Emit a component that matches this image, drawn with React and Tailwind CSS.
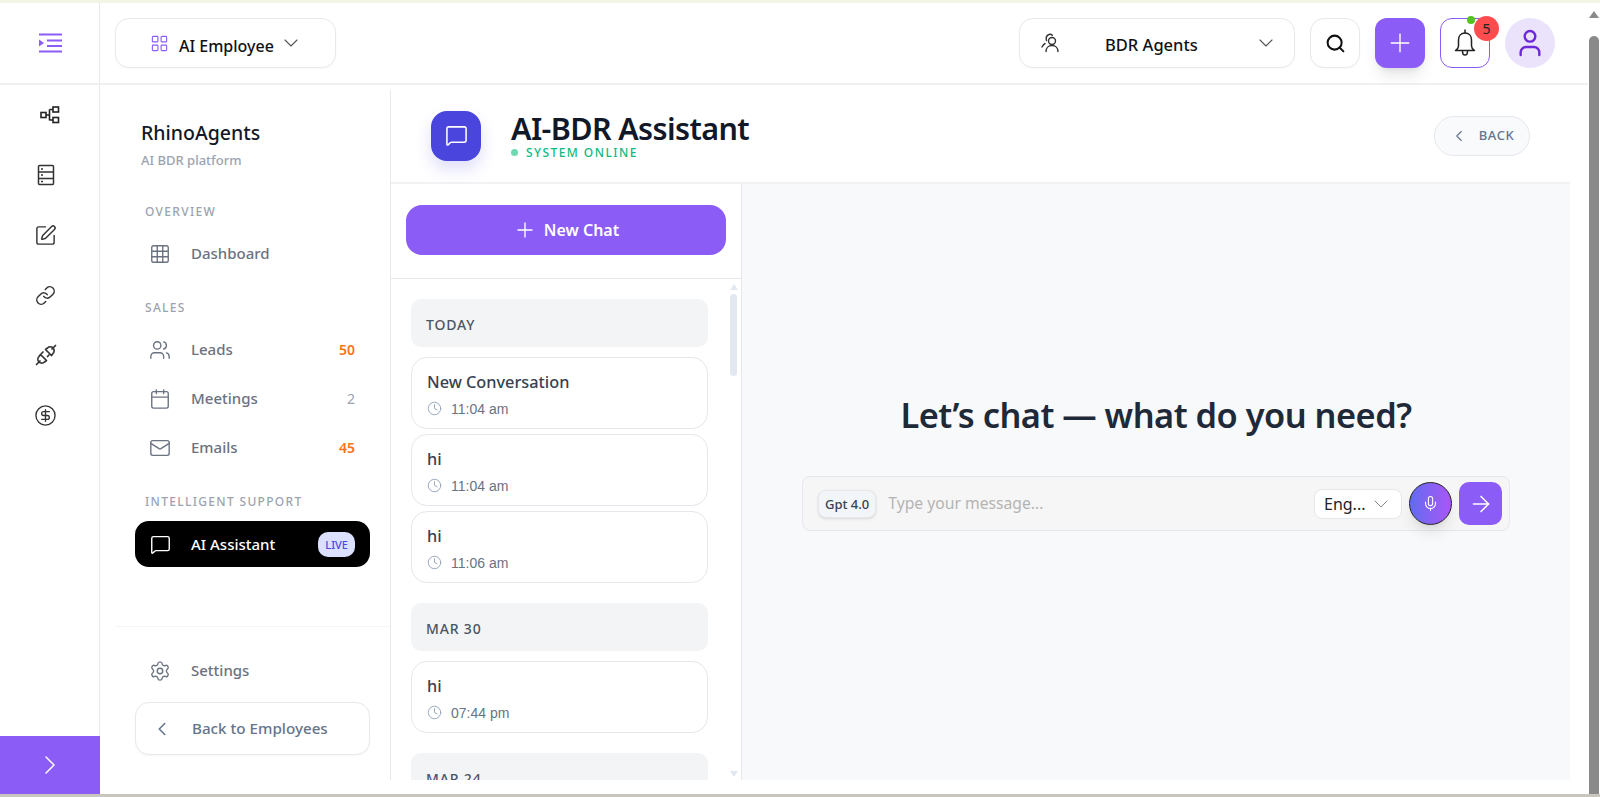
import React from "react";
import {
  ArrowRight,
  Calendar,
  ChevronDown,
  ChevronLeft,
  ChevronRight,
  CircleDollarSign,
  Clock,
  Grid3x3,
  LayoutGrid,
  Link,
  Mail,
  MessageSquare,
  Mic,
  Plus,
  Search,
  Settings,
  SquarePen,
  User,
  Users,
} from "lucide-react";

const font = "font-['Noto_Sans','Open_Sans',sans-serif]";

function MenuIcon() {
  return (
    <svg width="24" height="20" viewBox="0 0 24 20" fill="none" stroke="#8b5cf6" strokeWidth="2">
      <path d="M1 1.500h23M9 7.500h15M9 13h15M1 18.500h23" />
      <path d="M1 6.500l5 3.500-5 3.500z" fill="#8b5cf6" stroke="none" />
    </svg>
  );
}

function FlowIcon() {
  return (
    <svg width="20" height="18" viewBox="0 0 20 18" fill="none" stroke="#222" strokeWidth="1.600">
      <rect x="1" y="6.500" width="5" height="5" />
      <rect x="13" y="1" width="5.500" height="5" />
      <rect x="13" y="11.500" width="5.500" height="5" />
      <path d="M6 9h3.500M9.500 3.500v11M9.500 3.500H13M9.500 14H13" />
    </svg>
  );
}

function ServerIcon() {
  return (
    <svg width="18" height="22" viewBox="0 0 18 22" fill="none" stroke="#333" strokeWidth="1.500">
      <rect x="1.500" y="1.500" width="15" height="19" rx="1" />
      <path d="M1.500 8h15M1.500 14.500h15M4 5h2M4 11h2M4 17.500h2" />
    </svg>
  );
}

function PlugIcon() {
  return (
    <svg width="22" height="22" viewBox="0 0 22 22" fill="none" stroke="#333" strokeWidth="1.700" strokeLinecap="round" strokeLinejoin="round">
      <path d="M1.500 20.500l3.500-3.500M20.500 1.500L17 5" />
      <path d="M5.500 10.500l6 6-2 1.500a3.500 3.500 0 0 1-5.500-5.500z" />
      <path d="M16.500 11.500l-6-6 2-1.500a3.500 3.500 0 0 1 5.500 5.500z" />
      <path d="M8 8l-1.500 1.500M12.500 12.500L14 11" />
    </svg>
  );
}

function AgentsIcon() {
  return (
    <svg width="20" height="20" viewBox="0 0 20 20" fill="none" stroke="#333" strokeWidth="1.400" strokeLinecap="round">
      <circle cx="12" cy="8" r="3.500" />
      <path d="M6 18.500c0-3.500 2.500-6 6-6s6 2.500 6 6" />
      <path d="M5 10.500c-1 .5-2 1.500-3 3.500M6.500 7.500c-.7-2.500 0-5 2.500-6 1.200-.4 2.500 0 3.300.7" />
    </svg>
  );
}

function BellIcon() {
  return (
    <svg width="22" height="28" viewBox="0 0 22 28" fill="none" stroke="#222" strokeWidth="1.500" strokeLinecap="round" strokeLinejoin="round">
      <path d="M11 1v3" />
      <path d="M11 4c-4 0-6.500 3-6.500 7v6c0 1.500-1 3-3 4.500h19c-2-1.500-3-3-3-4.500v-6c0-4-2.500-7-6.500-7z" />
      <path d="M8.500 22.500c0 2 1 3.500 2.500 3.500s2.500-1.500 2.500-3.500" />
    </svg>
  );
}

function RailIcon({ children }) {
  return <div className="flex h-[60px] items-center justify-center pr-[8px]">{children}</div>;
}

function NavItem({ icon: Icon, label, count, hot }) {
  return (
    <div className="flex h-[49px] items-center pl-[14px] pr-[15px]">
      <Icon size={22} strokeWidth={1.500} className="mr-[20px] shrink-0 text-[#6b7280]" />
      <span className="flex-1 text-[15px] font-medium text-[#6b7280]">{label}</span>
      {count && <span className={`text-[14px] ${hot ? "font-semibold text-[#f97316]" : "text-[#9ca3af]"}`}>{count}</span>}
    </div>
  );
}

function SectionLabel({ children, className = "" }) {
  return <div className={`pl-[10px] text-[12px] font-medium leading-[18px] tracking-[0.11em] text-[#9ca3af] ${className}`}>{children}</div>;
}

function DayLabel({ children }) {
  return (
    <div className="flex h-[48px] items-center rounded-[10px] bg-[#f3f4f6] pl-[15px] pt-[2px] text-[14px] font-medium tracking-[0.06em] text-[#4b5563]">
      {children}
    </div>
  );
}

function ChatCard({ title, time }) {
  return (
    <div className="flex h-[72px] flex-col justify-center rounded-[16px] border border-[#e5e7eb] bg-white pl-[15px] pt-[2px]">
      <div className="text-[16.300px] font-medium leading-[24px] text-[#374151]">{title}</div>
      <div className="mt-[5px] flex items-center gap-[9px] font-['Liberation_Sans',sans-serif] text-[14px] leading-[20px] text-[#6b7280]">
        <Clock size={15} strokeWidth={1.500} className="text-[#94a3b8]" />
        {time}
      </div>
    </div>
  );
}

export default function App() {
  return (
    <div className={`flex h-[797px] flex-col overflow-hidden bg-white ${font}`}>
      <div className="h-[3px] shrink-0 bg-[#f4f4e6]" />
      <div className="flex min-h-0 flex-1">
        <div className="flex min-w-0 flex-1 flex-col">
          {/* top bar */}
          <div className="flex h-[82px] shrink-0 items-center border-b-2 border-[#f0f0f0]">
            <div className="flex h-full w-[100px] shrink-0 items-center justify-center border-r border-[#e9e9e9]">
              <MenuIcon />
            </div>
            <button className="ml-[15px] flex h-[50px] w-[221px] items-center rounded-[14px] border border-[#e9e9e9] bg-white pl-[34px] shadow-[0_1px_2px_rgba(0,0,0,0.03)]">
              <LayoutGrid size={19} strokeWidth={1.400} className="text-[#8b5cf6]" />
              <span className="ml-[10px] mt-[5px] text-[16px] font-medium text-[#111]">AI Employee</span>
              <ChevronDown size={24} strokeWidth={1.100} className="ml-[5px] text-[#555]" />
            </button>
            <div className="ml-auto flex items-center pr-[33px]">
              <button className="flex h-[50px] w-[276px] items-center rounded-[14px] border border-[#e9e9e9] bg-white pl-[20px] pr-[16px] shadow-[0_1px_2px_rgba(0,0,0,0.03)]">
                <AgentsIcon />
                <span className="ml-[45px] mt-[4px] flex-1 text-left text-[16.500px] font-medium text-[#111]">BDR Agents</span>
                <ChevronDown size={24} strokeWidth={1.100} className="text-[#555]" />
              </button>
              <button className="ml-[15px] flex h-[50px] w-[50px] items-center justify-center rounded-[14px] border border-[#e9e9e9] bg-white shadow-[0_1px_2px_rgba(0,0,0,0.03)]">
                <Search size={21} strokeWidth={2.300} className="text-[#111]" />
              </button>
              <button className="ml-[15px] flex h-[50px] w-[50px] items-center justify-center rounded-[12px] bg-[#8b5cf6] shadow-lg">
                <Plus size={30} strokeWidth={1.100} className="text-white" />
              </button>
              <button className="relative ml-[15px] flex h-[50px] w-[50px] items-center justify-center rounded-[12px] border border-[#8b5cf6] bg-white">
                <BellIcon />
                <span className="absolute right-[14px] top-[-3px] h-[8px] w-[8px] rounded-full bg-[#52c41a]" />
                <span className="absolute right-[-10px] top-[-3px] flex h-[25px] w-[25px] items-center justify-center rounded-full bg-[#ff4d4f] text-[14px] text-[#222]">5</span>
              </button>
              <div className="ml-[15px] flex h-[50px] w-[50px] items-center justify-center rounded-full bg-[#ebe3fb]">
                <User size={32} strokeWidth={1.800} className="text-[#6d28d9]" />
              </div>
            </div>
          </div>

          <div className="flex min-h-0 flex-1">
            {/* icon rail */}
            <div className="flex w-[100px] shrink-0 flex-col border-r border-[#e9e9e9]">
              <div className="flex-1">
                <div className="flex h-[60px] items-center justify-center"><FlowIcon /></div>
                <RailIcon><ServerIcon /></RailIcon>
                <RailIcon><SquarePen size={23} strokeWidth={1.500} className="text-[#333]" /></RailIcon>
                <RailIcon><Link size={21} strokeWidth={1.700} className="text-[#333]" /></RailIcon>
                <RailIcon><PlugIcon /></RailIcon>
                <RailIcon><CircleDollarSign size={23} strokeWidth={1.400} className="text-[#333]" /></RailIcon>
              </div>
              <div className="-mr-px flex h-[58px] items-center justify-center bg-[#8b5cf6]">
                <ChevronRight size={32} strokeWidth={1.100} className="text-white" />
              </div>
            </div>

            {/* nav sidebar */}
            <div className="mb-[14px] mt-[5px] flex w-[291px] shrink-0 flex-col border-r border-[#e9e9e9] pl-[35px] pr-[20px]">
              <div className="pl-[6px] pt-[28px]">
                <div className="text-[19.500px] font-medium leading-[30px] text-[#111827]">RhinoAgents</div>
                <div className="mt-[2px] text-[13px] font-medium leading-[20px] text-[#9ca3af]">AI BDR platform</div>
              </div>
              <SectionLabel className="mt-[33px]">OVERVIEW</SectionLabel>
              <div className="mt-[8px]"><NavItem icon={Grid3x3} label="Dashboard" /></div>
              <SectionLabel className="mt-[21px]">SALES</SectionLabel>
              <div className="mt-[8px]">
                <NavItem icon={Users} label="Leads" count="50" hot />
                <NavItem icon={Calendar} label="Meetings" count="2" />
                <NavItem icon={Mail} label="Emails" count="45" hot />
              </div>
              <SectionLabel className="mt-[21px]">INTELLIGENT SUPPORT</SectionLabel>
              <div className="mt-[10px] flex h-[46px] items-center rounded-[14px] bg-black pl-[15px] pr-[15px]">
                <MessageSquare size={21} strokeWidth={1.600} className="mr-[20px] text-white" />
                <span className="flex-1 text-[15px] font-medium text-white">AI Assistant</span>
                <span className="rounded-[10px] bg-[#dbe0ff] px-[7px] py-[4px] text-[11px] font-medium leading-[17px] text-[#4f46e5]">LIVE</span>
              </div>
              <div className="-mx-[20px] mt-auto border-t border-[#f6f6f6] px-[20px] pt-[19px]">
                <NavItem icon={Settings} label="Settings" />
                <button className="mb-[25px] mt-[7px] flex h-[53px] w-full items-center rounded-[14px] border border-[#e9e9e9] bg-white pl-[15px] shadow-[0_1px_2px_rgba(0,0,0,0.04)]">
                  <ChevronLeft size={22} strokeWidth={1.700} className="mr-[19px] text-[#64748b]" />
                  <span className="text-[15.200px] font-medium text-[#64748b]">Back to Employees</span>
                </button>
              </div>
            </div>

            {/* assistant */}
            <div className="mb-[14px] flex min-w-0 flex-1 flex-col pr-[18px]">
              <div className="flex h-[99px] shrink-0 items-center border-b-2 border-[#f1f2f4] pl-[40px] pr-[40px] pt-[4px]">
                <div className="flex h-[50px] w-[50px] items-center justify-center rounded-[16px] bg-[#4a45dc] shadow-[0_8px_16px_rgba(79,70,229,0.18)]">
                  <MessageSquare size={23} strokeWidth={1.600} className="text-white" />
                </div>
                <div className="ml-[30px] -mt-[2px]">
                  <div className="text-[30.500px] font-semibold leading-[36px] tracking-[-0.02em] text-[#111827]">AI-BDR Assistant</div>
                  <div className="flex items-center text-[12px] font-medium leading-[14px] tracking-[0.12em] text-[#10b981]">
                    <span className="mr-[8px] h-[7px] w-[7px] rounded-full bg-[#6ed8b0]" />
                    SYSTEM ONLINE
                  </div>
                </div>
                <button className="ml-auto flex h-[40px] w-[96px] items-center justify-center rounded-full border border-[#e5e7eb] bg-[#f8fafc]">
                  <ChevronLeft size={18} strokeWidth={1.500} className="mr-[11px] text-[#64748b]" />
                  <span className="text-[13px] font-medium tracking-[0.04em] text-[#64748b]">BACK</span>
                </button>
              </div>

              <div className="flex min-h-0 flex-1">
                <div className="flex w-[351px] shrink-0 flex-col border-r border-[#e5e7eb]">
                  <div className="shrink-0 border-b border-[#e5e7eb] px-[15px] pb-[23px] pt-[21px]">
                    <button className="flex h-[50px] w-full items-center justify-center rounded-[16px] bg-[#8b5cf6] text-[16px] font-semibold text-white">
                      <Plus size={24} strokeWidth={1.400} className="mr-[7px]" />
                      New Chat
                    </button>
                  </div>
                  <div className="relative min-h-0 flex-1 overflow-hidden pl-[20px] pr-[33px] pt-[20px]">
                    <DayLabel>TODAY</DayLabel>
                    <div className="mt-[10px] flex flex-col gap-[5px]">
                      <ChatCard title="New Conversation" time="11:04 am" />
                      <ChatCard title="hi" time="11:04 am" />
                      <ChatCard title="hi" time="11:06 am" />
                    </div>
                    <div className="mt-[20px]"><DayLabel>MAR 30</DayLabel></div>
                    <div className="mt-[10px]"><ChatCard title="hi" time="07:44 pm" /></div>
                    <div className="mt-[20px]"><DayLabel>MAR 24</DayLabel></div>
                    {/* list scrollbar */}
                    <div className="absolute right-[3px] top-[3px] h-[8px] w-0 border-x-[4px] border-b-[6px] border-x-transparent border-b-[#e2e8f0]" />
                    <div className="absolute right-[4px] top-[15px] h-[82px] w-[7px] rounded-full bg-[#e2e8f0]" />
                    <div className="absolute bottom-[3px] right-[3px] h-[6px] w-0 border-x-[4px] border-t-[6px] border-x-transparent border-t-[#e2e8f0]" />
                  </div>
                </div>

                <div className="flex min-w-0 flex-1 flex-col items-center bg-[#f8f9fb] pt-[206px]">
                  <h1 className="text-[34.400px] font-semibold leading-[50px] tracking-[-0.015em] text-[#1f2937]">Let’s chat — what do you need?</h1>
                  <div className="mt-[36px] flex h-[55px] w-[708px] items-center rounded-[8px] border border-[#e5e7eb] bg-[#f6f6f6] pl-[15px] pr-[7px]">
                    <span className="rounded-[8px] border border-[#e5e7eb] bg-[#f3f6f9] px-[6px] py-[3px] text-[13px] font-medium leading-[20px] text-[#374151] shadow-sm">Gpt 4.0</span>
                    <span className="ml-[12px] flex-1 text-[15.700px] text-[#b4b4b4]">Type your message...</span>
                    <div className="flex h-[30px] w-[88px] items-center rounded-[8px] border border-[#e5e7eb] bg-white pl-[9px] text-[16px] text-[#222]">
                      Eng...
                      <ChevronDown size={24} strokeWidth={1} className="ml-[3px] text-[#888]" />
                    </div>
                    <div className="ml-[7px] flex h-[43px] w-[43px] items-center justify-center rounded-full border border-[#222] bg-gradient-to-r from-[#5f6bf0] to-[#a855f7] shadow-lg">
                      <Mic size={17} strokeWidth={1.500} className="text-white" />
                    </div>
                    <div className="ml-[7px] flex h-[43px] w-[43px] items-center justify-center rounded-[10px] bg-[#8b5cf6]">
                      <ArrowRight size={26} strokeWidth={1.400} className="text-white" />
                    </div>
                  </div>
                </div>
              </div>
            </div>
          </div>
        </div>

        {/* page scrollbar */}
        <div className="flex w-[12px] shrink-0 flex-col items-center pt-[8px]">
          <div className="h-0 w-0 border-x-[5px] border-b-[7px] border-x-transparent border-b-[#8a8a8a]" />
          <div className="mt-[18px] w-[10px] flex-1 rounded-t-full bg-[#8a8a8a]" />
        </div>
      </div>
      <div className="h-[3px] shrink-0 bg-[#c9c6c0]" />
    </div>
  );
}
